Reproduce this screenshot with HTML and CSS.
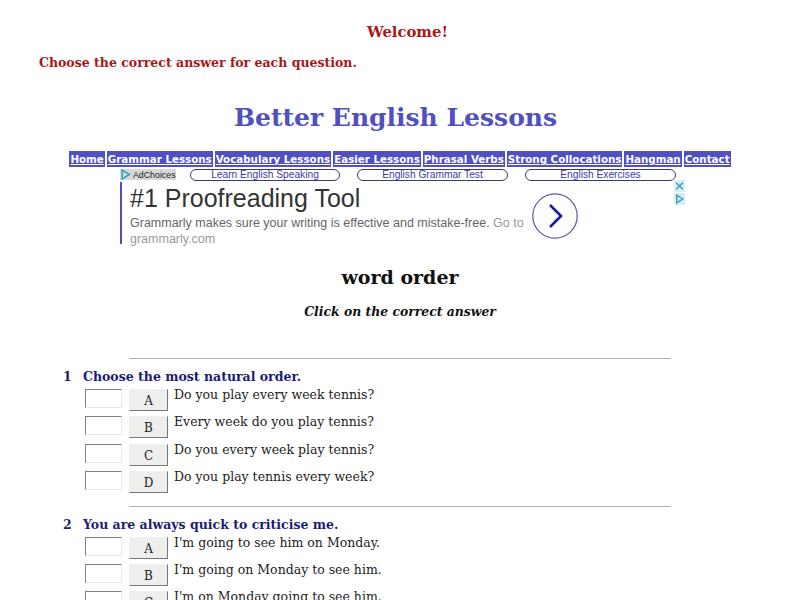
FILE: index.html
```html
<!DOCTYPE html>
<html lang="en">
<head>
<meta charset="utf-8">
<title>Better English Lessons</title>
<link rel="stylesheet" href="styles.css">
</head>
<body>
<h2 class="welcome">Welcome!</h2>
<p class="intro">Choose the correct answer for each question.</p>
<h1 class="brand">Better English Lessons</h1>
<nav class="nav">
  <a href="#">Home</a><a href="#">Grammar Lessons</a><a href="#">Vocabulary Lessons</a><a href="#">Easier Lessons</a><a href="#">Phrasal Verbs</a><a href="#">Strong Collocations</a><a href="#">Hangman</a><a href="#">Contact</a>
</nav>
<section class="ad">
  <div class="ad-links">
    <span class="adchoices"><svg class="ac-icon" viewBox="0 0 10 10"><path d="M2 1 L8.5 5 L2 9 Z" fill="none" stroke="#2aa6c4" stroke-width="1.4"/></svg>AdChoices</span>
    <a class="pill pill-1" href="#">Learn English Speaking</a>
    <a class="pill pill-2" href="#">English Grammar Test</a>
    <a class="pill pill-3" href="#">English Exercises</a>
  </div>
  <div class="ad-body">
    <div class="ad-copy">
      <div class="ad-title">#1 Proofreading Tool</div>
      <div class="ad-text">Grammarly makes sure your writing is effective and mistake-free. <span class="ad-light">Go to grammarly.com</span></div>
    </div>
    <div class="ad-arrow"><svg viewBox="0 0 46 46"><circle cx="23" cy="23" r="22.2" fill="#fff" stroke="#5a5aa8" stroke-width="1.2"/><path d="M18 12 L29 23 L18 34" fill="none" stroke="#1a1a9a" stroke-width="2.6"/></svg></div>
    <div class="ad-flags">
      <span class="flag"><svg viewBox="0 0 10 10"><path d="M2 2 L8 8 M8 2 L2 8" stroke="#3aa3bd" stroke-width="1.4"/></svg></span>
      <span class="flag"><svg viewBox="0 0 10 10"><path d="M2.5 1.5 L8 5 L2.5 8.5 Z" fill="none" stroke="#3aa3bd" stroke-width="1.3"/></svg></span>
    </div>
  </div>
</section>
<h2 class="topic">word order</h2>
<p class="hint">Click on the correct answer</p>

<hr class="rule rule-first">
<section class="question">
  <div class="q-head"><span class="q-num">1</span><span>Choose the most natural order.</span></div>
  <div class="option"><input class="box" type="text"><button class="btn">A</button><span>Do you play every week tennis?</span></div>
  <div class="option"><input class="box" type="text"><button class="btn">B</button><span>Every week do you play tennis?</span></div>
  <div class="option"><input class="box" type="text"><button class="btn">C</button><span>Do you every week play tennis?</span></div>
  <div class="option"><input class="box" type="text"><button class="btn">D</button><span>Do you play tennis every week?</span></div>
</section>
<hr class="rule">
<section class="question">
  <div class="q-head"><span class="q-num">2</span><span>You are always quick to criticise me.</span></div>
  <div class="option"><input class="box" type="text"><button class="btn">A</button><span>I'm going to see him on Monday.</span></div>
  <div class="option"><input class="box" type="text"><button class="btn">B</button><span>I'm going on Monday to see him.</span></div>
  <div class="option"><input class="box" type="text"><button class="btn">C</button><span>I'm on Monday going to see him.</span></div>
</section>
</body>
</html>
```
FILE: styles.css
```css
html, body { height: 600px; overflow: hidden; }
body {
  margin: 0;
  background: #fff;
  font-family: "DejaVu Serif", serif;
  color: #111;
}
.welcome {
  margin: 0;
  padding: 23px 0 0 15px;
  text-align: center;
  font-size: 14.8px;
  line-height: 18px;
  color: #a81818;
}
.intro {
  margin: 14px 0 0 39px;
  font-size: 12.5px;
  line-height: 16px;
  font-weight: bold;
  color: #a81818;
}
.brand {
  margin: 31px 0 0;
  padding-right: 9px;
  text-align: center;
  font-size: 25px;
  line-height: 32px;
  color: #5050c0;
}
.nav {
  margin-top: 17px;
  display: flex;
  justify-content: center;
  gap: 2px;
}
.nav a {
  background: #5050c0;
  color: #fff;
  font-family: "DejaVu Sans", sans-serif;
  font-weight: bold;
  font-size: 10.3px;
  line-height: 16px;
  padding: 0 1px;
  text-decoration: underline;
}
.ad {
  width: 566px;
  margin: 0 0 0 120px;
  font-family: "Liberation Sans", sans-serif;
}
.ad-links {
  display: flex;
  align-items: center;
  height: 13px;
  margin-top: 1px;
}
.adchoices {
  display: flex;
  align-items: center;
  gap: 2px;
  width: 56px;
  height: 11px;
  background: #d8d8d8;
  font-size: 8.8px;
  color: #222;
}
.ac-icon { width: 11px; height: 11px; flex: none; }
.pill {
  height: 12px;
  box-sizing: border-box;
  border: 1px solid #3c3c78;
  border-radius: 7px;
  text-align: center;
  font-size: 10.2px;
  line-height: 9px;
  color: #3a3aa8;
  text-decoration: none;
}
.pill-1 { width: 150px; margin-left: 14px; }
.pill-2 { width: 151px; margin-left: 17px; }
.pill-3 { width: 151px; margin-left: 17px; }
.ad-body {
  display: flex;
  align-items: flex-start;
  height: 65px;
}
.ad-copy {
  width: 398px;
  height: 62px;
  margin-top: 1px;
  border-left: 2px solid #5050b0;
  padding-left: 8px;
}
.ad-title {
  font-size: 25px;
  line-height: 28px;
  margin-top: 2px;
  color: #333;
}
.ad-text {
  font-size: 12.5px;
  line-height: 16px;
  margin-top: 3px;
  color: #666;
}
.ad-light { color: #999; }
.ad-arrow { width: 46px; height: 46px; margin: 12px 0 0 4px; }
.ad-arrow svg { display: block; width: 46px; height: 46px; }
.ad-flags {
  margin-left: 96px;
  margin-top: -1px;
  display: flex;
  flex-direction: column;
  gap: 1px;
}
.flag { display: block; width: 11px; height: 12px; background: #d6eef2; }
.flag svg { display: block; width: 11px; height: 12px; }
.topic {
  margin: 19px 0 0;
  text-align: center;
  font-size: 19px;
  line-height: 24px;
  color: #111;
}
.hint {
  margin: 15px 0 0;
  text-align: center;
  font-size: 12.4px;
  line-height: 16px;
  font-style: italic;
  font-weight: bold;
}
.rule {
  width: 542px;
  height: 1px;
  margin: 0 0 0 129px;
  border: 0;
  background: #b0b0b0;
}
.rule-first { margin-top: 38px; }
.question { padding-bottom: 7px; }
.q-head {
  display: flex;
  margin: 10px 0 0 63px;
  font-size: 12.5px;
  line-height: 16px;
  font-weight: bold;
  color: #1c1c78;
}
.q-num { width: 20px; }
.option {
  display: flex;
  align-items: flex-start;
  height: 27.4px;
  margin-left: 85px;
  font-size: 12.5px;
  line-height: 16px;
  color: #222;
}
.question .q-head + .option { margin-top: 4px; }
.box {
  width: 37px;
  height: 19px;
  box-sizing: border-box;
  padding: 0;
  border-width: 1px;
  border-style: solid;
  border-color: #808080 #e8e8e8 #e8e8e8 #808080;
  background: #fff;
}
.btn {
  width: 39px;
  height: 22px;
  box-sizing: border-box;
  margin: 0 6px 0 7px;
  padding: 2px 0 0;
  border-width: 1px;
  border-style: solid;
  border-color: #f0f0f0 #777 #777 #f0f0f0;
  background: #eeeeec;
  font-family: "DejaVu Serif", serif;
  font-size: 12px;
  color: #222;
}
.option span { margin-top: -2px; }
```
